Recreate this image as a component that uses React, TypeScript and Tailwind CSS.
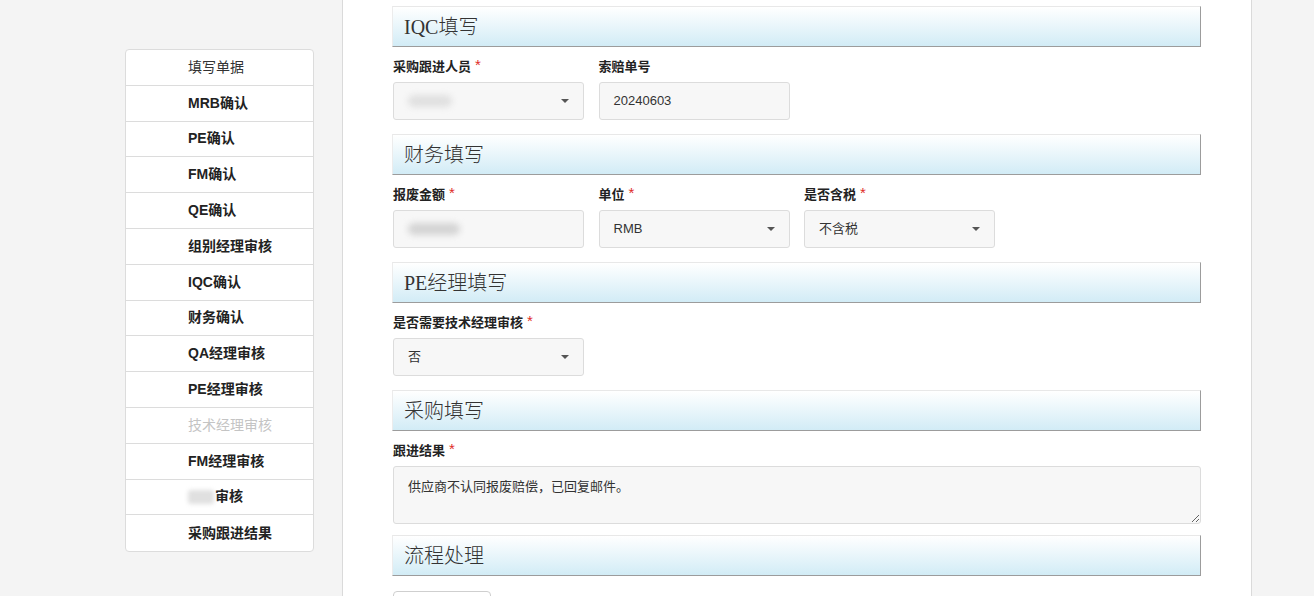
// Approval form: left step list + main form panel with section headers.

const font = { fontFamily: '"Liberation Sans", "Noto Sans CJK SC", sans-serif' };

const steps = [
  { label: "填写单据", kind: "plain" },
  { label: "MRB确认" },
  { label: "PE确认" },
  { label: "FM确认" },
  { label: "QE确认" },
  { label: "组别经理审核" },
  { label: "IQC确认" },
  { label: "财务确认" },
  { label: "QA经理审核" },
  { label: "PE经理审核" },
  { label: "技术经理审核", kind: "disabled" },
  { label: "FM经理审核" },
  { label: "审核", kind: "blur" },
  { label: "采购跟进结果" },
];

export default function App() {
  return (
    <div
      className="flex min-h-[596px] w-full bg-[#f4f4f4] text-[#333]"
      style={font}
    >
      {/* Step list */}
      <aside className="w-[342px] shrink-0 pl-[125px] pt-[49px]">
        <div className="w-[189px] overflow-hidden rounded-[4px] border border-[#dcdcdc] bg-white">
          {steps.map((s, i) => (
            <StepRow key={i} label={s.label} kind={s.kind} last={i === steps.length - 1} />
          ))}
        </div>
      </aside>

      {/* Form panel */}
      <main className="w-[910px] shrink-0 border-x border-[#dadada] bg-white pl-[49px] pr-[50px] pt-[6px]">
        <SectionHeader title="IQC填写" />
        <div className="mb-[14px] flex gap-[14.5px] pl-[1px]">
          <Field label="采购跟进人员" required>
            <SelectBox>
              <span className="block h-[12px] w-[44px] rounded-full bg-[#e0e0e0] blur-[3px]" />
            </SelectBox>
          </Field>
          <Field label="索赔单号">
            <InputBox>20240603</InputBox>
          </Field>
        </div>

        <SectionHeader title="财务填写" />
        <div className="mb-[14px] flex gap-[14.5px] pl-[1px]">
          <Field label="报废金额" required>
            <InputBox>
              <span className="block h-[12px] w-[52px] rounded-full bg-[#d4d4d4] blur-[3px]" />
            </InputBox>
          </Field>
          <Field label="单位" required>
            <SelectBox>RMB</SelectBox>
          </Field>
          <Field label="是否含税" required>
            <SelectBox>不含税</SelectBox>
          </Field>
        </div>

        <SectionHeader title="PE经理填写" />
        <div className="mb-[14px] flex gap-[14.5px] pl-[1px]">
          <Field label="是否需要技术经理审核" required>
            <SelectBox>否</SelectBox>
          </Field>
        </div>

        <SectionHeader title="采购填写" />
        <div className="mb-[11px] pl-[1px]">
          <Label text="跟进结果" required />
          <textarea
            readOnly
            defaultValue="供应商不认同报废赔偿，已回复邮件。"
            className="block h-[58px] w-full resize-y rounded-[3px] border border-[#dcdcdc] bg-[#f7f7f7] px-[14px] py-[11px] text-[13px] leading-[18px] text-[#333] outline-none"
            style={font}
          />
        </div>

        <SectionHeader title="流程处理" />
        <div className="pt-[4px] pl-[1px]">
          <div className="h-[30px] w-[98px] rounded-[4px] border border-[#cfcfcf] bg-white" />
        </div>
      </main>

      <div className="flex-1" />
    </div>
  );
}

function StepRow({ label, kind, last }: { label: string; kind?: string; last: boolean }) {
  const color =
    kind === "disabled"
      ? "text-[#c4c4c4] font-normal"
      : kind === "plain"
      ? "text-[#333] font-normal"
      : "text-[#222] font-bold";
  return (
    <div
      className={`flex h-[35.8px] items-center pl-[62px] text-[14px] ${color} ${
        last ? "" : "border-b border-[#dcdcdc]"
      }`}
    >
      {kind === "blur" && (
        <span className="mr-[1px] inline-block h-[14px] w-[26px] rounded-[3px] bg-[#e0e0e0] blur-[2px]" />
      )}
      {label}
    </div>
  );
}

function SectionHeader({ title }: { title: string }) {
  return (
    <div className="mb-[11px] flex h-[41px] items-center border-t border-l border-t-[#e8e8e8] border-l-[#ececec] border-r border-b border-r-[#9c9c9c] border-b-[#9c9c9c] bg-gradient-to-b from-white to-[#d2ecf6] pl-[11px]">
      <h2
        className="text-[20px] font-light text-[#333]"
        style={{ fontFamily: '"Liberation Serif", "Noto Sans CJK SC", serif' }}
      >
        {title}
      </h2>
    </div>
  );
}

function Label({ text, required }: { text: string; required?: boolean }) {
  return (
    <div className="mb-[6px] flex h-[18px] items-center text-[13px] font-bold text-[#222]">
      {text}
      {required && (
        <span className="ml-[4px] -translate-y-[3px] text-[15px] font-normal leading-none text-[#e02b27]">*</span>
      )}
    </div>
  );
}

function Field({
  label,
  required,
  children,
}: {
  label: string;
  required?: boolean;
  children: React.ReactNode;
}) {
  return (
    <div className="w-[191px]">
      <Label text={label} required={required} />
      {children}
    </div>
  );
}

function InputBox({ children }: { children: React.ReactNode }) {
  return (
    <div className="flex h-[38px] items-center rounded-[3px] border border-[#dcdcdc] bg-[#f7f7f7] px-[14px] text-[13px] text-[#333]">
      {children}
    </div>
  );
}

function SelectBox({ children }: { children: React.ReactNode }) {
  return (
    <div className="flex h-[38px] items-center justify-between rounded-[3px] border border-[#dcdcdc] bg-[#f7f7f7] pl-[14px] pr-[14px] text-[13px] text-[#333]">
      <span className="flex items-center">{children}</span>
      <svg width="8" height="4" viewBox="0 0 8 4" className="shrink-0">
        <path d="M0 0 L8 0 L4 4 Z" fill="#555" />
      </svg>
    </div>
  );
}
